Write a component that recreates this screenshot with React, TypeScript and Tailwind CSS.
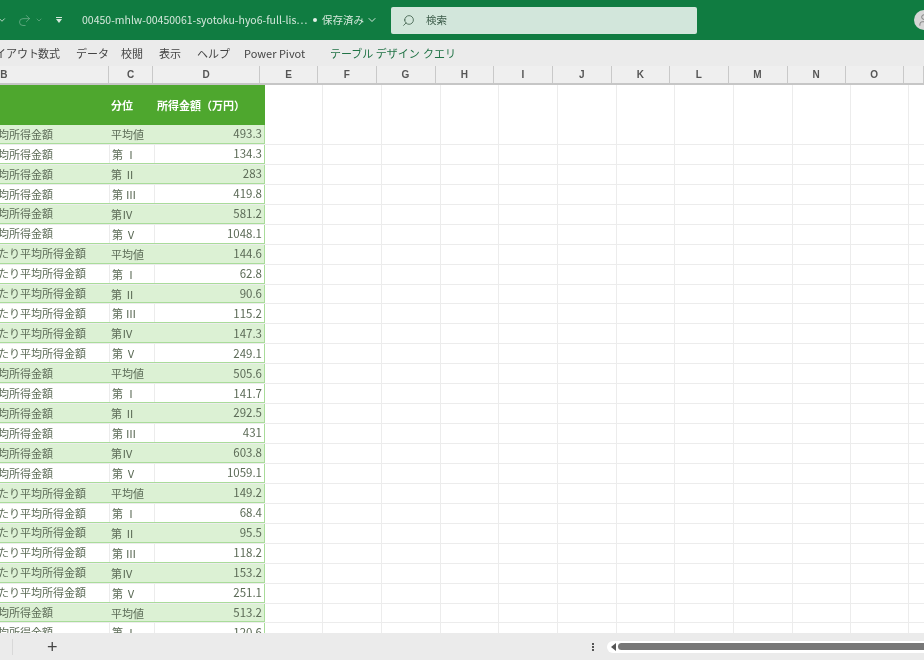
import { ChevronDown, Redo2, Search, User } from 'lucide-react'

const jp = "font-['Noto_Sans_CJK_JP','Noto_Sans',sans-serif]"

const tabs = [
  { label: 'レイアウト', width: 'w-[54px]', green: false, clip: true },
  { label: '数式', width: 'w-[38px]', green: false },
  { label: 'データ', width: 'w-[45px]', green: false },
  { label: '校閲', width: 'w-[38px]', green: false },
  { label: '表示', width: 'w-[38px]', green: false },
  { label: 'ヘルプ', width: 'w-[47px]', green: false },
  { label: 'Power Pivot', width: 'w-[86px]', green: false },
  { label: 'テーブル デザイン', width: 'w-[93px]', green: true },
  { label: 'クエリ', width: 'w-[40px]', green: true },
]

const gridCols = [
  { label: 'E', width: 'w-[58px]' },
  { label: 'F', width: 'w-[58.5px]' },
  { label: 'G', width: 'w-[59px]' },
  { label: 'H', width: 'w-[58.5px]' },
  { label: 'I', width: 'w-[59px]' },
  { label: 'J', width: 'w-[58.5px]' },
  { label: 'K', width: 'w-[58.5px]' },
  { label: 'L', width: 'w-[58.5px]' },
  { label: 'M', width: 'w-[59px]' },
  { label: 'N', width: 'w-[58px]' },
  { label: 'O', width: 'w-[58.5px]' },
  { label: '', width: 'w-[20px]' },
]

const perPerson = '均所得金額'
const perHead = 'たり平均所得金額'
const levels = ['平均値', '第 Ⅰ', '第 Ⅱ', '第 Ⅲ', '第Ⅳ', '第 Ⅴ']

const amounts = [
  '493.3', '134.3', '283', '419.8', '581.2', '1048.1',
  '144.6', '62.8', '90.6', '115.2', '147.3', '249.1',
  '505.6', '141.7', '292.5', '431', '603.8', '1059.1',
  '149.2', '68.4', '95.5', '118.2', '153.2', '251.1',
  '513.2', '120.6',
]

const rows = amounts.map((amount, i) => ({
  name: Math.floor(i / 6) % 2 === 0 ? perPerson : perHead,
  level: levels[i % 6],
  amount,
  band: i % 2 === 0,
}))

function TitleBar() {
  return (
    <div className="flex h-[40px] shrink-0 items-center bg-[#107c41] text-[#d5e8dc]">
      <ChevronDown className="ml-[-3px] h-[10px] w-[10px]" />
      <Redo2 className="ml-[10px] h-[15px] w-[15px] opacity-50" strokeWidth={1.2} />
      <ChevronDown className="ml-[3px] h-[8px] w-[8px] opacity-50" />
      <div className="ml-[12px] flex w-[8px] flex-col items-center gap-[1px]">
        <div className="h-[1px] w-[6px] bg-[#d5e8dc]" />
        <div className="h-0 w-0 border-x-[3px] border-t-[4px] border-x-transparent border-t-[#d5e8dc]" />
      </div>
      <span className={`ml-[19px] w-[228px] whitespace-nowrap text-[10.5px] ${jp}`}>
        00450-mhlw-00450061-syotoku-hyo6-full-lis⋯
      </span>
      <div className="ml-[3px] h-[4px] w-[4px] rounded-full bg-[#e4f0e8]" />
      <span className={`ml-[5px] text-[10.5px] ${jp}`}>保存済み</span>
      <ChevronDown className="ml-[2px] h-[12px] w-[12px]" />
      <div className="ml-[13px] flex h-[27px] w-[306px] items-center rounded-[2px] bg-[#d2e6db] text-[#3c5c49]">
        <Search className="ml-[11px] h-[13px] w-[13px] -scale-x-100" strokeWidth={1.5} />
        <span className={`ml-[11px] text-[10.5px] ${jp}`}>検索</span>
      </div>
      <div className="ml-auto mr-[-10px] flex h-[20px] w-[20px] items-center justify-center rounded-full bg-[#d6d6d6] text-[#777777]">
        <User className="h-[14px] w-[14px]" strokeWidth={1.5} />
      </div>
    </div>
  )
}

function Ribbon() {
  return (
    <div className="flex h-[26px] shrink-0 items-center bg-[#ebebeb] pt-[1px]">
      <div className="ml-[-16px] flex">
        {tabs.map((tab) => (
          <span
            key={tab.label}
            className={`${tab.width} whitespace-nowrap text-[11px] ${jp} ${tab.green ? 'text-[#217346]' : 'text-[#444444]'}`}
          >
            {tab.label}
          </span>
        ))}
      </div>
    </div>
  )
}

function ColumnHeaders() {
  const cell = 'flex items-center justify-center border-r border-[#c9c9c9]'
  return (
    <div className="flex h-[19px] shrink-0 border-b-2 border-[#c6c6c6] bg-[#efefef] text-[10px] font-semibold text-[#555555] font-['Liberation_Sans',sans-serif]">
      <div className={`${cell} w-[109px] pr-[100px]`}>B</div>
      <div className={`${cell} w-[46px]`}>C</div>
      <div className={`${cell} w-[110px]`}>D</div>
      {gridCols.map((col) => (
        <div key={col.label} className={`${cell} ${col.width} shrink-0`}>
          {col.label}
        </div>
      ))}
    </div>
  )
}

function EmptyCells() {
  return (
    <div className="flex">
      {gridCols.map((col) => (
        <div key={col.label} className={`${col.width} shrink-0 self-stretch border-r border-[#ececec]`} />
      ))}
    </div>
  )
}

function Sheet() {
  return (
    <div className={`flex min-h-0 flex-1 flex-col overflow-hidden bg-white text-[11px] ${jp}`}>
      <div className="flex h-[40px] shrink-0">
        <div className="flex w-[265px] shrink-0 items-center bg-[#4ea72e] font-semibold text-white">
          <span className="ml-[111px] w-[46px]">分位</span>
          <span>所得金額（万円）</span>
        </div>
        <EmptyCells />
      </div>
      {rows.map((row, i) => (
        <div key={i} className="flex h-[19.95px] shrink-0 border-b border-[#ececec]">
          <div
            className={`flex w-[265px] shrink-0 items-center border-b border-r border-[#a9dc9a] text-[#5c6b57] ${row.band ? 'bg-[#dcf1d4]' : 'bg-white'}`}
          >
            <div className="w-[109px] shrink-0 overflow-hidden whitespace-nowrap">
              <span className="ml-[-2px] block">{row.name}</span>
            </div>
            <div className={`h-full w-[46px] shrink-0 pl-[2px] leading-[19px] ${row.band ? '' : 'border-x border-[#ececec]'}`}>
              {row.level}
            </div>
            <div className="flex-1 pr-[2px] text-right text-[11.5px]">{row.amount}</div>
          </div>
          <EmptyCells />
        </div>
      ))}
    </div>
  )
}

function BottomBar() {
  return (
    <div className="flex h-[27px] shrink-0 items-center bg-[#ebebeb]">
      <div className="ml-[12px] h-[16px] w-px bg-[#d8d8d8]" />
      <span className="ml-[34px] text-[18px] leading-none text-[#444444] font-['Liberation_Sans',sans-serif]">+</span>
      <div className="ml-[534px] flex flex-col gap-[1px]">
        <div className="h-[2px] w-[2px] bg-[#555555]" />
        <div className="h-[2px] w-[2px] bg-[#555555]" />
        <div className="h-[2px] w-[2px] bg-[#555555]" />
      </div>
      <div className="ml-[13px] flex h-[12px] flex-1 items-center rounded-l-full bg-white pl-[4px]">
        <div className="h-0 w-0 border-y-[4px] border-r-[5px] border-y-transparent border-r-[#555555]" />
        <div className="ml-[2px] h-[7px] flex-1 rounded-l-full bg-[#777777]" />
      </div>
    </div>
  )
}

export default function App() {
  return (
    <div className="flex h-[660px] w-[924px] flex-col overflow-hidden blur-[0.4px]">
      <TitleBar />
      <Ribbon />
      <ColumnHeaders />
      <Sheet />
      <BottomBar />
    </div>
  )
}
